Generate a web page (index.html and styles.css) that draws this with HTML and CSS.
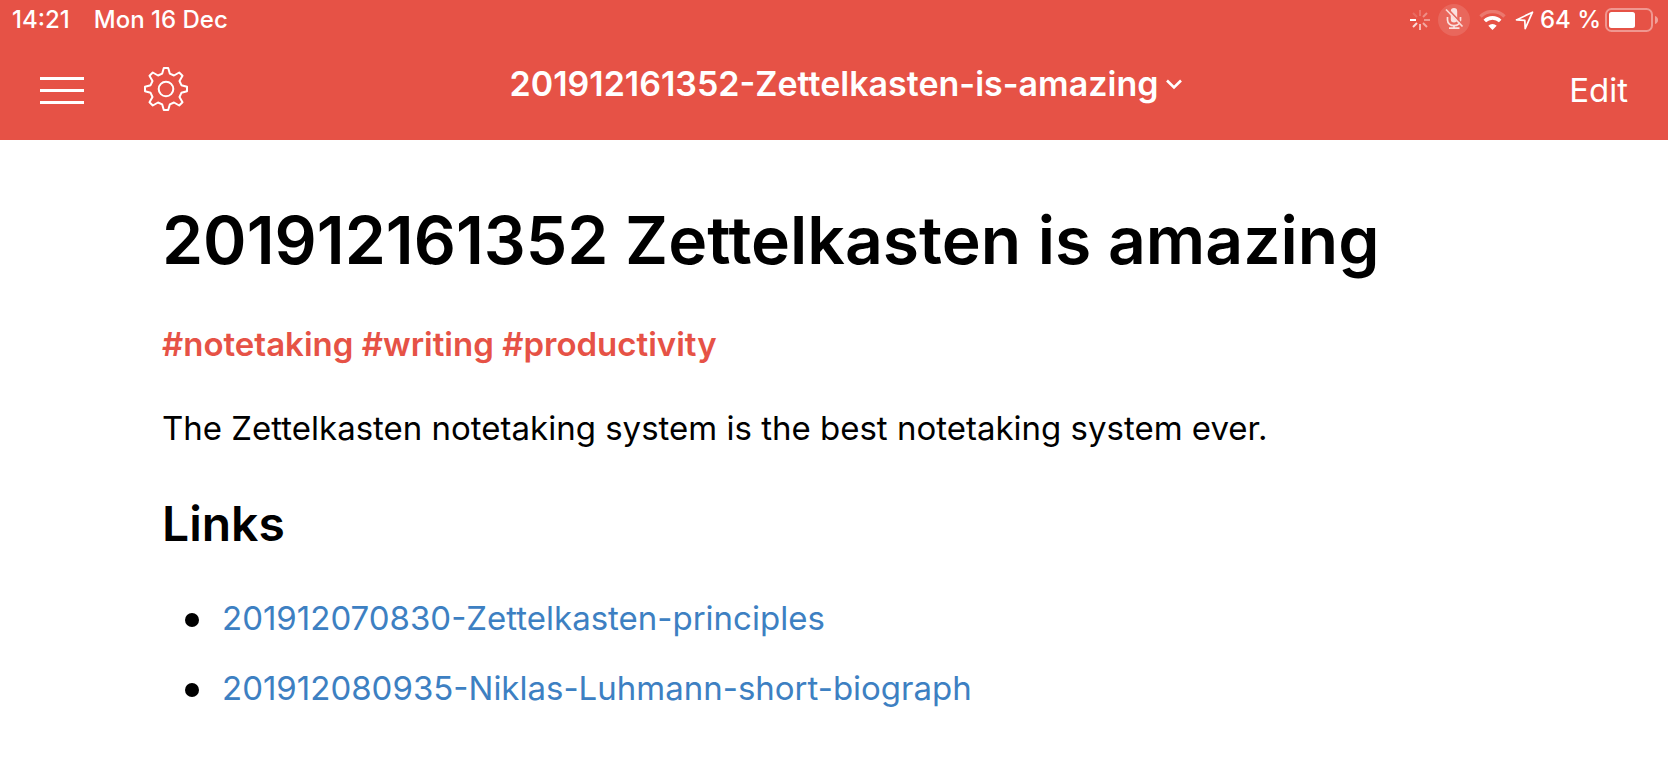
FILE: index.html
```html
<!DOCTYPE html>
<html lang="en">
<head>
  <meta charset="utf-8">
  <meta name="viewport" content="width=device-width, initial-scale=1">
  <title>201912161352-Zettelkasten-is-amazing</title>
  <link rel="stylesheet" href="styles.css">
</head>
<body>
  <header class="top">
    <div class="status">
      <div class="status-left">
        <span>14:21</span>
        <span>Mon 16 Dec</span>
      </div>
      <div class="status-right">
        <svg class="spinner" width="20" height="20" viewBox="0 0 20 20" fill="none" stroke="#fff" stroke-width="2" aria-hidden="true">
          <path d="M10 0v6" opacity=".2"/>
          <path d="M17 3l-4 4" opacity=".35"/>
          <path d="M20 10h-6" opacity=".4"/>
          <path d="M17 17l-4-4" opacity=".5"/>
          <path d="M10 20v-6" opacity=".6"/>
          <path d="M3 17l4-4" opacity=".8"/>
          <path d="M0 10h6"/>
          <path d="M3 3l4 4" opacity=".15"/>
        </svg>
        <svg class="mic" width="32" height="32" viewBox="0 0 32 32" fill="none" aria-hidden="true">
          <circle cx="16" cy="16" r="16" fill="#fff" opacity=".12"/>
          <g opacity=".8">
            <rect x="12.800" y="4" width="6.400" height="14.500" rx="3.200" fill="#fff"/>
            <path d="M9.500 13v3a6.500 5.700 0 0 0 13 0v-3M16 21.700V24M11 24.200h10.500" stroke="#fff" stroke-width="1.700"/>
          </g>
          <path d="M9.500 4.500L25.500 21.500" stroke="#e76a60" stroke-width="1.800"/>
          <path d="M8 5.500L24.500 22.500" stroke="#fadbd8" stroke-width="1.700"/>
        </svg>
        <svg class="wifi" width="27" height="20" viewBox="0 0 27 20" fill="none" stroke="#fff" aria-hidden="true">
          <path d="M1.500 6.500a17 17 0 0 1 24 0" stroke-width="3.400" opacity=".22"/>
          <path d="M5.800 11a11 11 0 0 1 15.400 0" stroke-width="3.600"/>
          <path d="M13.500 20l-4.200-4.200a6 6 0 0 1 8.400 0z" fill="#fff" stroke="none"/>
        </svg>
        <svg class="location" width="19" height="19" viewBox="0 0 19 19" fill="none" stroke="#fff" stroke-width="1.700" stroke-linejoin="round" aria-hidden="true">
          <path d="M17.500 1.200L1.500 8.900l8.300.5.400 8.200z"/>
        </svg>
        <span class="percent">64&nbsp;%</span>
        <svg class="battery" width="53" height="24" viewBox="0 0 53 24" fill="none" aria-hidden="true">
          <rect x="1" y="1" width="46" height="22" rx="5.500" stroke="#fff" stroke-width="2" opacity=".4"/>
          <rect x="4" y="4" width="26" height="16" rx="2.500" fill="#fff"/>
          <path d="M50 8c1.800.5 3 2 3 4s-1.200 3.500-3 4z" fill="#fff" opacity=".45"/>
        </svg>
      </div>
    </div>
    <nav class="bar">
      <div class="tools">
        <button type="button" aria-label="Menu">
          <svg width="44" height="44" viewBox="0 0 44 44" stroke="#fff" stroke-width="3" aria-hidden="true">
            <path d="M0 11.500h44M0 23.500h44M0 35.500h44"/>
          </svg>
        </button>
        <button type="button" aria-label="Settings">
          <svg width="44" height="44" viewBox="0 0 44 44" fill="none" stroke="#fff" stroke-width="2" stroke-linejoin="round" aria-hidden="true">
            <circle cx="22" cy="22" r="7.300"/>
            <path d="M19.800 1h4.400l1.600 5.600 4.200 1.900 5.200-3 3.300 3.300-3 5.200 1.900 4.200 5.600 1.600v4.400l-5.600 1.600-1.900 4.200 3 5.200-3.300 3.300-5.200-3-4.200 1.900-1.600 5.600h-4.400l-1.600-5.600-4.200-1.900-5.200 3-3.300-3.300 3-5.200-1.900-4.200L1 24.200v-4.400l5.600-1.600 1.900-4.200-3-5.200 3.300-3.300 5.200 3 4.200-1.900z"/>
          </svg>
        </button>
      </div>
      <button class="doc-title" type="button">
        <span>201912161352-Zettelkasten-is-amazing</span>
        <svg width="16" height="11" viewBox="0 0 16 11" fill="none" stroke="#fff" stroke-width="2.600" aria-hidden="true">
          <path d="M1 1.500l7 7 7-7"/>
        </svg>
      </button>
      <button class="edit" type="button">Edit</button>
    </nav>
  </header>
  <main class="note">
    <h1>201912161352 Zettelkasten is amazing</h1>
    <p class="tags"><a href="#notetaking">#notetaking</a> <a href="#writing">#writing</a> <a href="#productivity">#productivity</a></p>
    <p>The Zettelkasten notetaking system is the best notetaking system ever.</p>
    <h2>Links</h2>
    <ul class="links">
      <li><a href="#principles">201912070830-Zettelkasten-principles</a></li>
      <li><a href="#luhmann">201912080935-Niklas-Luhmann-short-biograph</a></li>
    </ul>
  </main>
</body>
</html>
```
FILE: styles.css
```css
* {
  box-sizing: border-box;
}

body {
  margin: 0;
  background: #fff;
  color: #000;
  font-family: Inter, "Liberation Sans", sans-serif;
  font-size: 33px;
  line-height: 50px;
}

button {
  padding: 0;
  border: 0;
  background: none;
  color: inherit;
  font: inherit;
  cursor: pointer;
}

svg {
  display: block;
  flex: none;
}

a {
  color: inherit;
  text-decoration: none;
}

.top {
  background: #e65246;
  color: #fff;
}

.status {
  display: flex;
  justify-content: space-between;
  height: 40px;
  padding: 0 10px 0 12px;
  font-size: 24px;
  font-weight: 500;
  line-height: 40px;
}

.status-left {
  display: flex;
  gap: 24px;
}

.status-right {
  display: flex;
  align-items: center;
}

.mic {
  margin-left: 8px;
}

.wifi {
  margin-left: 9px;
}

.location {
  margin-left: 9px;
}

.percent {
  margin: 0 4px 0 6px;
}

.bar {
  display: grid;
  grid-template-columns: 1fr auto 1fr;
  align-items: start;
  padding: 19px 40px 25px;
}

.tools {
  display: flex;
  gap: 60px;
  padding-top: 8px;
}

.doc-title {
  display: flex;
  align-items: center;
  gap: 8px;
  padding-left: 24px;
  font-size: 34px;
  font-weight: 600;
}

.edit {
  justify-self: end;
  padding-top: 6px;
}

.note {
  padding: 60px 162px;
}

h1,
h2,
p,
ul {
  margin: 0;
}

h1 {
  margin-bottom: 39px;
  font-size: 66px;
  font-weight: 600;
  line-height: 80px;
}

h2 {
  margin: 41px 0 39px;
  font-size: 48px;
  font-weight: 600;
  line-height: 60px;
}

.tags {
  margin-bottom: 34px;
  color: #e65246;
  font-weight: 600;
}

.links {
  display: grid;
  gap: 20px;
  padding-left: 23px;
  color: #3d80c2;
  list-style: none;
}

.links li {
  display: flex;
  align-items: center;
  gap: 23px;
}

.links li::before {
  content: "";
  flex: none;
  width: 14px;
  height: 14px;
  margin-top: 4px;
  border-radius: 50%;
  background: #000;
}
```
